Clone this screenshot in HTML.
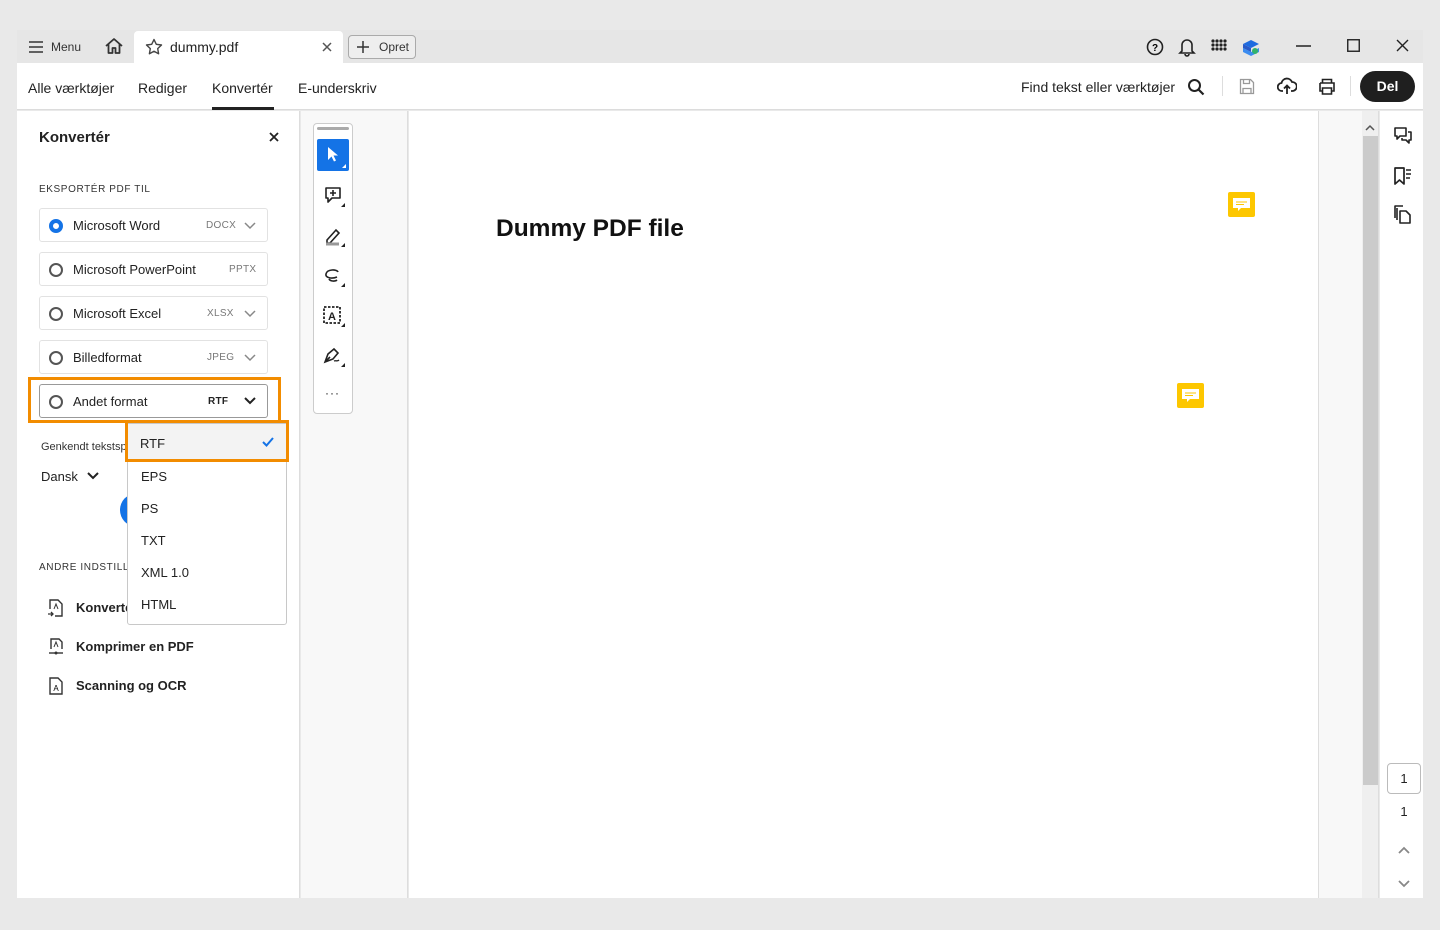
<!DOCTYPE html>
<html><head><meta charset="utf-8"><style>
*{box-sizing:border-box;margin:0;padding:0}
body{width:1440px;height:930px;background:#e9e9e9;font-family:"Liberation Sans",Arial,sans-serif;color:#222;position:relative;overflow:hidden}
.a{position:absolute}
svg{display:block}
.tb{left:17px;top:30px;width:1406px;height:33px;background:#e6e6e6}
.bar{left:17px;top:63px;width:1406px;height:47px;background:#fff;border-bottom:1px solid #dcdcdc}
.nav{top:80px;font-size:14px;color:#222}
.lp{left:17px;top:111px;width:283px;height:787px;background:#fff;border-right:1px solid #ddd}
.card{left:39px;width:229px;height:34px;border:1px solid #e2e2e2;border-radius:3px;font-size:13px}
.card .r{position:absolute;left:9px;top:10px;width:14px;height:14px;border:2px solid #555;border-radius:50%}
.card .t{position:absolute;left:33px;top:9px}
.card .f{position:absolute;font-size:10px;color:#777;top:11px;letter-spacing:.3px}
.dd{left:127px;top:423px;width:160px;height:202px;background:#fff;border:1px solid #c8c8c8;border-radius:0 0 3px 3px;font-size:13px}
.dd div{position:absolute;left:13px}
.lab{font-size:10px;color:#333;letter-spacing:.6px}
</style></head><body>
<div class="a tb"></div>
<svg class="a" style="left:28px;top:40px" width="16" height="14"><path d="M1 2h14M1 7h14M1 12h14" stroke="#333" stroke-width="1.6"/></svg>
<div class="a" style="left:51px;top:40px;font-size:12px;color:#333">Menu</div>
<svg class="a" style="left:104px;top:37px" width="20" height="18"><path d="M2 9L10 2l8 7M4.5 7v9h4v-5h3v5h4V7" fill="none" stroke="#333" stroke-width="1.8" stroke-linejoin="round"/></svg>
<div class="a" style="left:134px;top:31px;width:209px;height:32px;background:#fff;border-radius:4px 4px 0 0"></div>
<svg class="a" style="left:145px;top:38px" width="18" height="18"><path d="M9 1.5l2.3 4.8 5.2.7-3.8 3.6.9 5.2L9 13.3l-4.6 2.5.9-5.2L1.5 7l5.2-.7z" fill="none" stroke="#444" stroke-width="1.4" stroke-linejoin="round"/></svg>
<div class="a" style="left:170px;top:39px;font-size:14px">dummy.pdf</div>
<svg class="a" style="left:322px;top:42px" width="10" height="10"><path d="M1 1l8 8M9 1l-8 8" stroke="#555" stroke-width="1.5"/></svg>
<div class="a" style="left:348px;top:35px;width:68px;height:24px;border:1px solid #aaa;border-radius:4px;background:#eee;font-size:12px;color:#333;padding:4px 0 0 30px">Opret</div>
<svg class="a" style="left:357px;top:41px" width="12" height="12"><path d="M6 0v12M0 6h12" stroke="#333" stroke-width="1.5"/></svg>
<svg class="a" style="left:1146px;top:38px" width="18" height="18"><circle cx="9" cy="9" r="7.5" fill="none" stroke="#222" stroke-width="1.6"/><text x="9" y="13" font-size="10" font-weight="bold" text-anchor="middle" font-family="Liberation Sans">?</text></svg>
<svg class="a" style="left:1178px;top:37px" width="18" height="20"><path d="M4 14V8a5 5 0 0110 0v6l2 2H2zM7 17a2 2 0 004 0" fill="none" stroke="#222" stroke-width="1.6"/></svg>
<svg class="a" style="left:1211px;top:39px" width="16" height="16" fill="#222"><circle cx="2" cy="2" r="1.6"/><circle cx="6" cy="2" r="1.6"/><circle cx="10" cy="2" r="1.6"/><circle cx="14" cy="2" r="1.6"/><circle cx="2" cy="6" r="1.6"/><circle cx="6" cy="6" r="1.6"/><circle cx="10" cy="6" r="1.6"/><circle cx="14" cy="6" r="1.6"/><circle cx="2" cy="10" r="1.6"/><circle cx="6" cy="10" r="1.6"/><circle cx="10" cy="10" r="1.6"/><circle cx="14" cy="10" r="1.6"/></svg>
<svg class="a" style="left:1242px;top:39px" width="18" height="18"><path d="M9 1l8 4-8 4-8-4z" fill="#1e6be0"/><path d="M1 9l8 4 8-4v4l-8 4-8-4z" fill="#3b8cf0"/><path d="M1 5l8 4v4L1 9z" fill="#2a5bc8"/><circle cx="13" cy="12" r="3" fill="#33b36b"/></svg>
<svg class="a" style="left:1296px;top:45px" width="15" height="2"><path d="M0 1h15" stroke="#222" stroke-width="1.5"/></svg>
<svg class="a" style="left:1347px;top:39px" width="13" height="13"><rect x=".75" y=".75" width="11.5" height="11.5" fill="none" stroke="#222" stroke-width="1.4"/></svg>
<svg class="a" style="left:1396px;top:39px" width="13" height="13"><path d="M1 1l11 11M12 1L1 12" stroke="#222" stroke-width="1.4"/></svg>
<div class="a bar"></div>
<div class="a nav" style="left:28px">Alle værktøjer</div>
<div class="a nav" style="left:138px">Rediger</div>
<div class="a nav" style="left:212px">Konvertér</div>
<div class="a" style="left:212px;top:107px;width:62px;height:3px;background:#222"></div>
<div class="a nav" style="left:298px">E-underskriv</div>
<div class="a nav" style="left:1021px;top:79px">Find tekst eller værktøjer</div>
<svg class="a" style="left:1187px;top:78px" width="18" height="18"><circle cx="7.5" cy="7.5" r="5.5" fill="none" stroke="#222" stroke-width="2"/><path d="M11.5 11.5l5 5" stroke="#222" stroke-width="2.2"/></svg>
<div class="a" style="left:1222px;top:76px;width:1px;height:20px;background:#ddd"></div>
<svg class="a" style="left:1239px;top:78px" width="16" height="17"><path d="M1.5 1.5h10l3 3v11h-13z M4.5 1.5v4h6v-4 M4 15.5v-5h8v5" fill="none" stroke="#999" stroke-width="1.3"/></svg>
<svg class="a" style="left:1277px;top:76px" width="20" height="20"><path d="M6 15H5a4 4 0 01-.5-8A5.5 5.5 0 0115 6a4 4 0 01.5 9H14M10 18v-8M7 12.5l3-3 3 3" fill="none" stroke="#222" stroke-width="1.8"/></svg>
<svg class="a" style="left:1318px;top:78px" width="18" height="17"><path d="M4.5 5V1.5h9V5M2 5h14v8h-2.5M4.5 13H2V5M4.5 10h9v6h-9z" fill="none" stroke="#222" stroke-width="1.6"/></svg>
<div class="a" style="left:1350px;top:76px;width:1px;height:20px;background:#ddd"></div>
<div class="a" style="left:1360px;top:71px;width:55px;height:31px;background:#1f1f1f;border-radius:16px;color:#fff;font-weight:bold;font-size:14px;text-align:center;line-height:30px">Del</div>
<div class="a lp"></div>
<div class="a" style="left:39px;top:129px;font-size:15px;font-weight:bold">Konvertér</div>
<svg class="a" style="left:269px;top:132px" width="10" height="10"><path d="M1 1l8 8M9 1l-8 8" stroke="#222" stroke-width="1.8"/></svg>
<div class="a lab" style="left:39px;top:184px">EKSPORTÉR PDF TIL</div>
<div class="a card" style="top:208px"><div class="r" style="border:4px solid #1473e6;background:#fff"></div><div class="t">Microsoft Word</div><div class="f" style="left:166px">DOCX</div><svg class="a" style="left:204px;top:13px" width="12" height="8"><path d="M1 1l5 5 5-5" fill="none" stroke="#888" stroke-width="1.5"/></svg></div>
<div class="a card" style="top:252px"><div class="r"></div><div class="t">Microsoft PowerPoint</div><div class="f" style="left:189px">PPTX</div></div>
<div class="a card" style="top:296px"><div class="r"></div><div class="t">Microsoft Excel</div><div class="f" style="left:167px">XLSX</div><svg class="a" style="left:204px;top:13px" width="12" height="8"><path d="M1 1l5 5 5-5" fill="none" stroke="#888" stroke-width="1.5"/></svg></div>
<div class="a card" style="top:340px"><div class="r"></div><div class="t">Billedformat</div><div class="f" style="left:167px">JPEG</div><svg class="a" style="left:204px;top:13px" width="12" height="8"><path d="M1 1l5 5 5-5" fill="none" stroke="#888" stroke-width="1.5"/></svg></div>
<div class="a" style="left:28px;top:377px;width:253px;height:46px;border:3px solid #f28c00"></div>
<div class="a card" style="top:384px;border-color:#999"><div class="r"></div><div class="t">Andet format</div><div class="f" style="left:168px;color:#222;font-weight:bold">RTF</div><svg class="a" style="left:204px;top:12px" width="12" height="8"><path d="M1 1l5 5 5-5" fill="none" stroke="#222" stroke-width="2"/></svg></div>
<div class="a" style="left:41px;top:441px;font-size:11px;color:#333">Genkendt tekstsp</div>
<div class="a" style="left:41px;top:469px;font-size:13px">Dansk</div>
<svg class="a" style="left:87px;top:472px" width="12" height="8"><path d="M1 1l5 5 5-5" fill="none" stroke="#222" stroke-width="2"/></svg>
<div class="a" style="left:120px;top:494px;width:30px;height:32px;border-radius:50%;background:#1473e6"></div>
<div class="a lab" style="left:39px;top:562px">ANDRE INDSTILLI</div>
<svg class="a" style="left:47px;top:598px" width="18" height="20"><path d="M3 11V2h8l4 4v12H8" fill="none" stroke="#333" stroke-width="1.4"/><path d="M1 16h5M4 14l2 2-2 2" fill="none" stroke="#333" stroke-width="1.3"/><path d="M7 11l2-5 2 5" fill="none" stroke="#333" stroke-width="1"/></svg>
<div class="a" style="left:76px;top:600px;font-size:13px;font-weight:bold">Konverte</div>
<svg class="a" style="left:47px;top:637px" width="18" height="20"><path d="M4 12V2h8l3 3v7" fill="none" stroke="#333" stroke-width="1.4"/><path d="M2 16h14" stroke="#333" stroke-width="1.4"/><circle cx="9" cy="16" r="1.5" fill="#333"/><path d="M7 10l2-5 2 5" fill="none" stroke="#333" stroke-width="1"/></svg>
<div class="a" style="left:76px;top:639px;font-size:13px;font-weight:bold">Komprimer en PDF</div>
<svg class="a" style="left:47px;top:676px" width="18" height="20"><path d="M3 18V2h8l4 4v12z" fill="none" stroke="#333" stroke-width="1.4"/><text x="9" y="15" font-size="8" text-anchor="middle" font-family="Liberation Sans">A</text></svg>
<div class="a" style="left:76px;top:678px;font-size:13px;font-weight:bold">Scanning og OCR</div>
<div class="a dd">
<div style="top:13px">RTF</div><div style="top:45px">EPS</div><div style="top:77px">PS</div><div style="top:109px">TXT</div><div style="top:141px">XML 1.0</div><div style="top:173px">HTML</div>
</div>
<div class="a" style="left:128px;top:424px;width:158px;height:36px;background:#f3f3f3"></div>
<div class="a" style="left:140px;top:436px;font-size:13px">RTF</div>
<svg class="a" style="left:262px;top:437px" width="12" height="10"><path d="M1 5l3.5 3.5L11 1" fill="none" stroke="#1473e6" stroke-width="2"/></svg>
<div class="a" style="left:125px;top:420px;width:164px;height:42px;border:3px solid #f28c00"></div>
<div class="a" style="left:301px;top:111px;width:107px;height:787px;background:#f8f8f8;border-right:1px solid #ddd"></div>
<div class="a" style="left:313px;top:123px;width:40px;height:291px;background:#fff;border:1px solid #ccc;border-radius:4px"></div>
<div class="a" style="left:317px;top:127px;width:32px;height:3px;background:#aaa;border-radius:2px"></div>
<div class="a" style="left:317px;top:139px;width:32px;height:32px;background:#1473e6;border-radius:2px"></div>
<svg class="a" style="left:317px;top:139px" width="32" height="32"><path d="M11 8v13l3.5-3.5 2.5 5 2-1-2.5-5H21z" fill="#fff"/><path d="M29 25v4h-4z" fill="#fff"/></svg>
<svg class="a" style="left:317px;top:181px" width="32" height="30"><path d="M9 7h14v10h-8l-4 4v-4H9z" fill="none" stroke="#222" stroke-width="1.6" stroke-linejoin="round"/><path d="M16 9v6M13 12h6" stroke="#222" stroke-width="1.6"/><path d="M28 22v4h-4z" fill="#222"/></svg>
<svg class="a" style="left:317px;top:221px" width="32" height="30"><path d="M10 19l9-10 3 3-9 10h-3z" fill="none" stroke="#222" stroke-width="1.6"/><path d="M9 23h13" stroke="#999" stroke-width="3"/><path d="M28 22v4h-4z" fill="#222"/></svg>
<svg class="a" style="left:317px;top:261px" width="32" height="30"><path d="M21 11c-1-3-11-3-12 2-1 4 6 5 11 3M12 18c1 2 6 3 8 1" fill="none" stroke="#222" stroke-width="1.6"/><path d="M28 22v4h-4z" fill="#222"/></svg>
<svg class="a" style="left:317px;top:301px" width="32" height="30"><rect x="7" y="6" width="16" height="16" fill="none" stroke="#222" stroke-width="1.8" stroke-dasharray="2.5 1.5"/><text x="15" y="19" font-size="11" font-weight="bold" text-anchor="middle" font-family="Liberation Sans" fill="#222">A</text><path d="M28 22v4h-4z" fill="#222"/></svg>
<svg class="a" style="left:317px;top:341px" width="32" height="30"><path d="M8 21l3-8 6-5 4 4-5 6z M8 21l5-5" fill="none" stroke="#222" stroke-width="1.6"/><path d="M17 20c2-1 3 1 5-1" fill="none" stroke="#222" stroke-width="1.3"/><path d="M28 22v4h-4z" fill="#222"/></svg>
<div class="a" style="left:325px;top:386px;font-size:12px;letter-spacing:1px">···</div>
<div class="a" style="left:409px;top:111px;width:909px;height:787px;background:#fff"></div>
<div class="a" style="left:496px;top:215px;font-size:24.5px;font-weight:bold;color:#111">Dummy PDF file</div>
<svg class="a" style="left:1228px;top:192px" width="27" height="26"><rect width="27" height="25" rx="2" fill="#fdc700"/><path d="M5 6h17v10h-9l-3 3v-3H5z" fill="#fff"/><path d="M8 10h11M8 12.5h8" stroke="#fdc700" stroke-width="1"/></svg>
<svg class="a" style="left:1177px;top:383px" width="27" height="26"><rect width="27" height="25" rx="2" fill="#fdc700"/><path d="M5 6h17v10h-9l-3 3v-3H5z" fill="#fff"/><path d="M8 10h11M8 12.5h8" stroke="#fdc700" stroke-width="1"/></svg>
<div class="a" style="left:1318px;top:111px;width:44px;height:787px;background:#f8f8f8;border-left:1px solid #ddd"></div>
<div class="a" style="left:1362px;top:111px;width:17px;height:787px;background:#efefef;border-right:1px solid #ddd"></div>
<div class="a" style="left:1363px;top:136px;width:15px;height:649px;background:#cbcbcb"></div>
<svg class="a" style="left:1365px;top:124px" width="10" height="7"><path d="M1 6l4-4 4 4" fill="none" stroke="#555" stroke-width="1.5"/></svg>
<div class="a" style="left:1380px;top:111px;width:43px;height:787px;background:#fff"></div>
<svg class="a" style="left:1393px;top:126px" width="20" height="20"><path d="M2 2h11v8H7l-3 3v-3H2z" fill="none" stroke="#222" stroke-width="1.6" stroke-linejoin="round"/><path d="M15 6h3v8h-2v3l-3-3H9v-2" fill="none" stroke="#222" stroke-width="1.6" stroke-linejoin="round"/></svg>
<svg class="a" style="left:1393px;top:166px" width="20" height="20"><path d="M2 2h9v16l-4.5-4L2 18z" fill="none" stroke="#222" stroke-width="1.7" stroke-linejoin="round"/><path d="M13 4h5M13 8h5M13 12h4" stroke="#222" stroke-width="1.4"/></svg>
<svg class="a" style="left:1394px;top:205px" width="18" height="19"><path d="M3 15V3" fill="none" stroke="#222" stroke-width="1.6"/><path d="M6 6h6l4 4v8H6z M1 13V1h8" fill="none" stroke="#222" stroke-width="1.6" stroke-linejoin="round"/></svg>
<div class="a" style="left:1387px;top:763px;width:34px;height:31px;border:1px solid #bbb;border-radius:4px;font-size:13px;text-align:center;line-height:29px">1</div>
<div class="a" style="left:1387px;top:804px;width:34px;font-size:13px;text-align:center">1</div>
<svg class="a" style="left:1398px;top:846px" width="12" height="8"><path d="M1 7l5-5 5 5" fill="none" stroke="#888" stroke-width="1.8"/></svg>
<svg class="a" style="left:1398px;top:880px" width="12" height="8"><path d="M1 1l5 5 5-5" fill="none" stroke="#888" stroke-width="1.8"/></svg>
</body></html>
